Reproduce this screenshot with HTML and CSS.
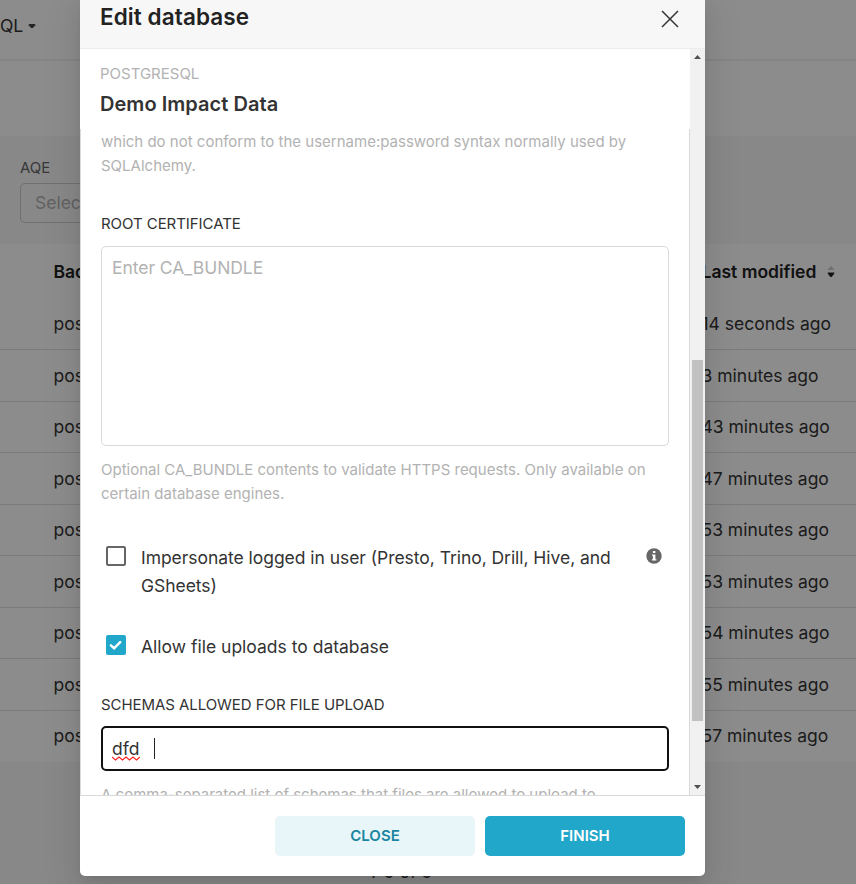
FILE: index.html
```
<!DOCTYPE html>
<html lang="en">
<head>
<meta charset="utf-8">
<title>Edit database</title>
<link rel="stylesheet" href="styles.css">
</head>
<body>
<div class="page">
  <nav class="navbar"><span>QL</span><svg width="8" height="6" viewBox="0 0 8 6"><path d="M.8 1h6.4v1.6L4.8 5H3.2L.8 2.6z" fill="#444"/></svg></nav>
  <div class="subnav"></div>
  <div class="filters">
    <div class="filter-label">AQE</div>
    <div class="filter-select">Select or type a value</div>
  </div>
  <div class="table">
    <div class="row head"><span>Backend</span><span class="modified">Last modified<svg class="sort" width="8" height="14" viewBox="0 0 8 14"><path d="M4 1l3 3.2V5H1v-.8z" fill="#ccc"/><path d="M.8 7.6h6.4v1.2L4.6 12H3.4L.8 8.8z" fill="#222"/></svg></span></div>
    <div class="row"><span>postgresql</span><span class="modified">14 seconds ago</span></div>
    <div class="row"><span>postgresql</span><span class="modified">3 minutes ago</span></div>
    <div class="row"><span>postgresql</span><span class="modified">43 minutes ago</span></div>
    <div class="row"><span>postgresql</span><span class="modified">47 minutes ago</span></div>
    <div class="row"><span>postgresql</span><span class="modified">53 minutes ago</span></div>
    <div class="row"><span>postgresql</span><span class="modified">53 minutes ago</span></div>
    <div class="row"><span>postgresql</span><span class="modified">54 minutes ago</span></div>
    <div class="row"><span>postgresql</span><span class="modified">55 minutes ago</span></div>
    <div class="row last"><span>postgresql</span><span class="modified">57 minutes ago</span></div>
  </div>
  <div class="count">1-9 of 9</div>
</div>
<div class="mask"></div>
<section class="modal">
  <header class="modal-header">
    <h1>Edit database</h1>
    <svg class="close" width="18" height="18" viewBox="0 0 18 18"><path d="M1 1l16 16M17 1L1 17" stroke="#333" stroke-width="1.5" fill="none"/></svg>
  </header>
  <div class="modal-body">
    <div class="content">
      <div class="db-head">
        <div class="db-type">POSTGRESQL</div>
        <div class="db-name">Demo Impact Data</div>
      </div>
      <div class="form">
        <p class="help">which do not conform to the username:password syntax normally used by<br>SQLAlchemy.</p>
        <div class="label root">ROOT CERTIFICATE</div>
        <div class="textarea">Enter CA_BUNDLE</div>
        <p class="help cert">Optional CA_BUNDLE contents to validate HTTPS requests. Only available on<br>certain database engines.</p>
        <div class="check-row first">
          <span class="box"></span>
          <span class="check-text">Impersonate logged in user (Presto, Trino, Drill, Hive, and<br>GSheets)</span>
          <svg class="info" width="16" height="16" viewBox="0 0 16 16"><circle cx="8" cy="8" r="7.7" fill="#666"/><path d="M6.9 3h2.5v2H6.9zM6 6.4h3.4v4.8h1v1.4H5.9v-1.4h1V7.8H6z" fill="#fff"/></svg>
        </div>
        <div class="check-row second">
          <span class="box checked"><svg width="20" height="20" viewBox="0 0 20 20"><path d="M4.9 10.4l3.2 2.9 6.1-6.2" fill="none" stroke="#fff" stroke-width="2.5" stroke-linecap="round"/></svg></span>
          <span class="check-text">Allow file uploads to database</span>
        </div>
        <div class="label schemas">SCHEMAS ALLOWED FOR FILE UPLOAD</div>
        <div class="input"><span class="typed">dfd<svg class="squiggle" width="28" height="5" viewBox="0 0 28 5"><path d="M0 1l3.5 3L7 1l3.5 3L14 1l3.5 3L21 1l3.5 3L28 1" fill="none" stroke="#f22" stroke-width="1.2"/></svg></span><span class="caret"></span></div>
        <p class="help upload">A comma-separated list of schemas that files are allowed to upload to.</p>
      </div>
    </div>
    <div class="scrollbar">
      <svg width="7" height="4" viewBox="0 0 7 4"><path d="M0 4L3.5 0 7 4z" fill="#505050"/></svg>
      <div class="thumb"></div>
      <svg width="7" height="4" viewBox="0 0 7 4"><path d="M0 0l3.5 4L7 0z" fill="#505050"/></svg>
    </div>
  </div>
  <footer class="modal-footer">
    <button class="btn secondary">CLOSE</button>
    <button class="btn primary">FINISH</button>
  </footer>
</section>
</body>
</html>
```
FILE: styles.css
```
* { box-sizing: border-box; }
body { margin: 0; height: 884px; overflow: hidden; position: relative; font: 17.5px/27.5px Inter, sans-serif; color: #333; background: #f7f7f7; }
p, h1 { margin: 0; }
svg { display: block; flex: none; }
.page { height: 884px; overflow: hidden; }
.navbar { height: 61px; padding-bottom: 8px; display: flex; align-items: center; gap: 5px; letter-spacing: -.2px; background: #fff; border-bottom: 2px solid #f0f0f0; }
.subnav { height: 75px; background: #fff; }
.filters { height: 108px; padding: 20px; }
.filter-label { font-size: 15px; line-height: 24px; color: #666; }
.filter-select { margin-top: 3px; width: 250px; height: 40px; padding: 0 14px; line-height: 38px; border: 1px solid #ccc; border-radius: 5px; color: #b2b2b2; white-space: nowrap; }
.table { background: #fff; }
.row { height: 51.5px; padding-left: 53.5px; display: grid; grid-template-columns: 648px 1fr; align-items: center; border-bottom: 1px solid #e0e0e0; white-space: nowrap; }
.row.head { height: 54.5px; padding-top: 1px; font-weight: 600; color: #222; border: 0; }
.row.last { height: 51px; border: 0; }
.modified { display: flex; align-items: center; }
.sort { margin-left: 10.5px; }
.count { margin-top: 96px; text-align: center; padding-right: 55px; }
.mask { position: absolute; inset: 0; background: rgba(0,0,0,.45); }
.modal { position: absolute; left: 80px; top: 0; width: 625px; height: 876px; display: flex; flex-direction: column; overflow: hidden; background: #fff; border-radius: 0 0 5px 5px; box-shadow: 0 4px 8px -5px rgba(0,0,0,.12), 0 8px 20px rgba(0,0,0,.08), 0 11px 35px 10px rgba(0,0,0,.05); }
.modal-header { height: 49px; flex: none; padding: 3px 26px 18px 20px; display: flex; align-items: center; justify-content: space-between; background: #f7f7f7; border-bottom: 1px solid #ececec; }
h1 { font-size: 22.5px; line-height: 28px; font-weight: 600; letter-spacing: .09px; color: #222; }
.close { margin-top: 4px; }
.modal-body { height: 746px; flex: none; display: flex; overflow: hidden; }
.content { width: 610px; }
.db-head { height: 80px; padding: 13px 20px 0; }
.db-type { font-size: 15px; line-height: 24px; color: #b2b2b2; }
.db-name { margin-top: 3px; font-size: 20px; line-height: 30px; font-weight: 600; letter-spacing: .04px; }
.form { height: 666px; padding: 1px 20px 0; border-left: 1px solid #d9d9d9; border-right: 1px solid #d9d9d9; overflow: hidden; white-space: nowrap; }
.help { font-size: 15px; line-height: 24px; color: #b2b2b2; }
.label { font-size: 15px; line-height: 24px; letter-spacing: -.06px; }
.root { margin-top: 34px; }
.textarea { margin-top: 10px; height: 200px; padding: 7px 10px; border: 1px solid #d9d9d9; border-radius: 5px; color: #b2b2b2; letter-spacing: -.05px; }
.cert { margin-top: 12px; }
.check-row { display: flex; align-items: flex-start; padding-left: 5px; line-height: 28px; }
.first { margin-top: 38px; letter-spacing: -.045px; }
.second { margin-top: 33px; }
.box { width: 20px; height: 20px; margin: 1.5px 15px 0 0; border: 2px solid #666; border-radius: 2px; }
.box.checked { background: #20a7c9; border: 0; }
.check-text { flex: 1; }
.info { margin: 4px 7px 0 0; }
.schemas { margin-top: 32px; }
.input { margin-top: 9px; height: 45px; padding: 0 9px; display: flex; align-items: center; border: 2px solid #111; border-radius: 5px; }
.typed { position: relative; }
.squiggle { position: absolute; left: 0; bottom: 1px; }
.caret { width: 1px; height: 21px; margin-left: 15px; background: #222; }
.upload { margin-top: 12px; }
.scrollbar { width: 15px; padding: 6px 0; display: flex; flex-direction: column; align-items: center; background: #f1f1f1; }
.thumb { width: 11px; height: 361px; margin: 301px 0 64px; background: #c1c1c1; }
.modal-footer { height: 81px; flex: none; padding: 20px; display: flex; justify-content: flex-end; gap: 10px; border-top: 1px solid #d9d9d9; }
.btn { width: 200px; height: 40px; padding: 0 0 2px; border: 0; border-radius: 5px; font: 600 15px Inter, sans-serif; }
.secondary { background: #e9f6f9; color: #1a85a0; }
.primary { background: #20a7c9; color: #fff; }
```
